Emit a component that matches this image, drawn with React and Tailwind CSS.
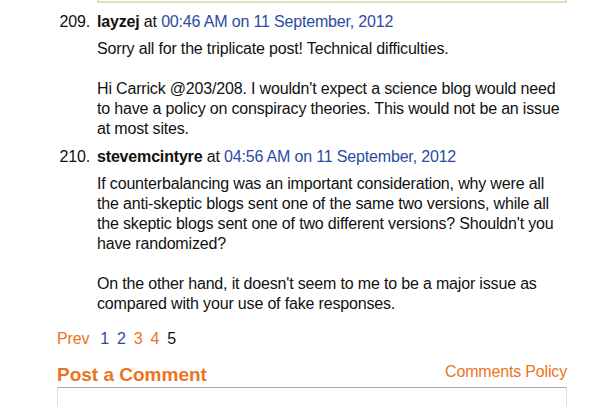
import React from 'react';

const comments = [
  {
    num: '209.',
    author: 'layzej',
    time: '00:46 AM on 11 September, 2012',
    paras: [
      'Sorry all for the triplicate post! Technical difficulties.',
      "Hi Carrick @203/208. I wouldn't expect a science blog would need to have a policy on conspiracy theories. This would not be an issue at most sites.",
    ],
  },
  {
    num: '210.',
    author: 'stevemcintyre',
    time: '04:56 AM on 11 September, 2012',
    paras: [
      "If counterbalancing was an important consideration, why were all the anti-skeptic blogs sent one of the same two versions, while all the skeptic blogs sent one of two different versions? Shouldn't you have randomized?",
      "On the other hand, it doesn't seem to me to be a major issue as compared with your use of fake responses.",
    ],
  },
];

const Comment = ({ c }) => (
  <li className="flex">
    <span className="w-[40px] text-right pr-[7px] shrink-0">{c.num}</span>
    <div className="flex-1">
      <div>
        <b>{c.author}</b> at <a className="text-[#2b4ba3]">{c.time}</a>
      </div>
      <div className="mt-[7px] flex flex-col gap-5">
        {c.paras.map((p, i) => (
          <p key={i}>{p}</p>
        ))}
      </div>
    </div>
  </li>
);

export default function App() {
  return (
    <div className="w-[614px] h-[406px] overflow-hidden bg-white text-[16px] leading-[20px] tracking-[-0.17px] text-[#111] font-['Liberation_Sans',Arial,sans-serif]">
      <div className="pl-[57px] w-[567px]">
        {/* tail of the previous box */}
        <div className="ml-[40px] h-[3px] border-x-2 border-b-2 border-[#d3e6bd]" />

        <ol className="mt-[9px] flex flex-col gap-[8px]">
          {comments.map(c => (
            <Comment key={c.num} c={c} />
          ))}
        </ol>

        <div className="mt-[15px] flex gap-[8px]">
          <a className="text-[#ec7420] mr-[3px]">Prev</a>
          <a className="text-[#2b4ba3]">1</a>
          <a className="text-[#2b4ba3]">2</a>
          <a className="text-[#ec7420]">3</a>
          <a className="text-[#ec7420]">4</a>
          <span>5</span>
        </div>

        <div className="mt-[13px] flex justify-between items-end">
          <h3 className="text-[19px] leading-[22px] font-bold tracking-normal text-[#ec7420]">Post a Comment</h3>
          <a className="text-[16px] text-[#ec7420] mb-[4px]">Comments Policy</a>
        </div>
        <div className="mt-[1px] h-[40px] border border-[#dedede] border-t-[#aaa]" />
      </div>
    </div>
  );
}
